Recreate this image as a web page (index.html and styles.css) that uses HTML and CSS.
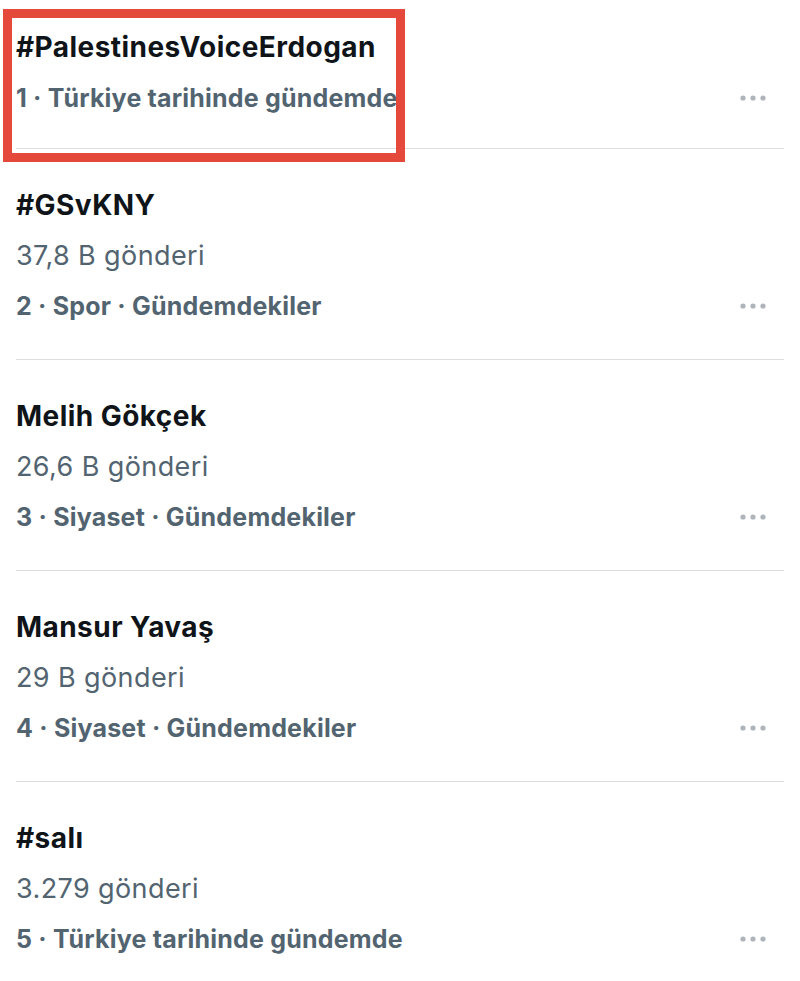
FILE: index.html
```html
<!DOCTYPE html>
<html lang="tr">
<head>
<meta charset="utf-8">
<link rel="stylesheet" href="styles.css">
</head>
<body>
<div class="trends">
  <div class="trend first">
    <div class="title">#PalestinesVoiceErdogan</div>
    <div class="meta"><span>1 · Türkiye tarihinde gündemde</span><svg class="more" viewBox="0 0 26 6" width="26" height="6"><circle cx="3" cy="3" r="2.6"/><circle cx="13" cy="3" r="2.6"/><circle cx="23" cy="3" r="2.6"/></svg></div>
  </div>
  <div class="trend">
    <div class="title">#GSvKNY</div>
    <div class="count">37,8 B gönderi</div>
    <div class="meta"><span>2 · Spor · Gündemdekiler</span><svg class="more" viewBox="0 0 26 6" width="26" height="6"><circle cx="3" cy="3" r="2.6"/><circle cx="13" cy="3" r="2.6"/><circle cx="23" cy="3" r="2.6"/></svg></div>
  </div>
  <div class="trend">
    <div class="title">Melih Gökçek</div>
    <div class="count">26,6 B gönderi</div>
    <div class="meta"><span>3 · Siyaset · Gündemdekiler</span><svg class="more" viewBox="0 0 26 6" width="26" height="6"><circle cx="3" cy="3" r="2.6"/><circle cx="13" cy="3" r="2.6"/><circle cx="23" cy="3" r="2.6"/></svg></div>
  </div>
  <div class="trend">
    <div class="title">Mansur Yavaş</div>
    <div class="count">29 B gönderi</div>
    <div class="meta"><span>4 · Siyaset · Gündemdekiler</span><svg class="more" viewBox="0 0 26 6" width="26" height="6"><circle cx="3" cy="3" r="2.6"/><circle cx="13" cy="3" r="2.6"/><circle cx="23" cy="3" r="2.6"/></svg></div>
  </div>
  <div class="trend last">
    <div class="title">#salı</div>
    <div class="count">3.279 gönderi</div>
    <div class="meta"><span>5 · Türkiye tarihinde gündemde</span><svg class="more" viewBox="0 0 26 6" width="26" height="6"><circle cx="3" cy="3" r="2.6"/><circle cx="13" cy="3" r="2.6"/><circle cx="23" cy="3" r="2.6"/></svg></div>
  </div>
  <div class="highlight"></div>
</div>
</body>
</html>
```
FILE: styles.css
```css
html, body {
  margin: 0;
  padding: 0;
  background: #ffffff;
}
body {
  font-family: Inter, "Noto Sans", sans-serif;
  color: #0f1419;
}
.trends {
  position: relative;
  margin: 0 16px;
}
.trend {
  padding: 30px 0 28px;
  border-bottom: 1px solid #dcdee0;
}
.trend.first {
  padding: 21px 0 25px;
}
.trend.last {
  border-bottom: none;
}
.title {
  font-size: 28px;
  font-weight: 700;
  letter-spacing: 0.45px;
  line-height: 52px;
  height: 52px;
  white-space: nowrap;
}
.count {
  font-size: 27px;
  font-weight: 400;
  letter-spacing: 0.4px;
  line-height: 50px;
  height: 50px;
  color: #536471;
}
.meta {
  display: flex;
  align-items: center;
  justify-content: space-between;
  font-size: 25px;
  font-weight: 700;
  letter-spacing: 0.2px;
  line-height: 50px;
  height: 50px;
  color: #536471;
  white-space: nowrap;
}
.more {
  fill: #aeb4ba;
  margin-right: 18px;
}
.highlight {
  position: absolute;
  left: -13px;
  top: 9px;
  width: 384px;
  height: 135px;
  border: 9px solid #e4493c;
  pointer-events: none;
}
```
